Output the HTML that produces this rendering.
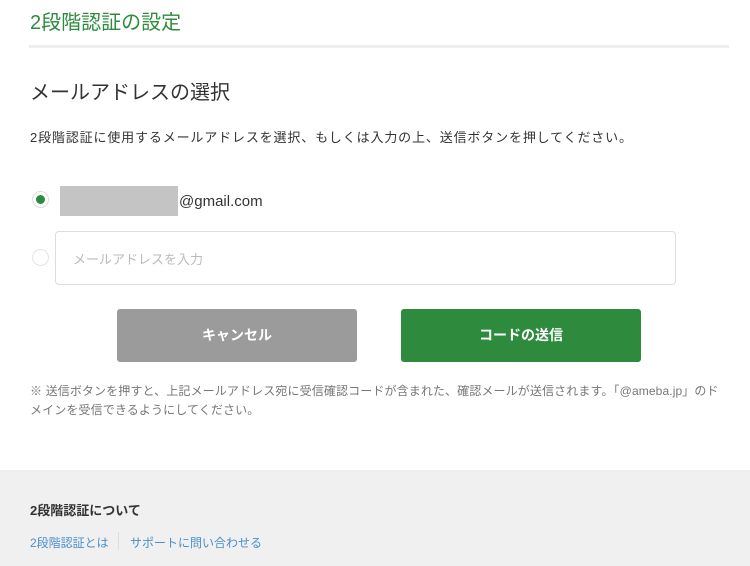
<!DOCTYPE html>
<html><head><meta charset="utf-8"><style>
*{margin:0;padding:0;box-sizing:border-box}
body{width:750px;height:566px;background:#fff;font-family:"Liberation Sans","Noto Sans CJK JP",sans-serif;color:#333;position:relative;overflow:hidden}
.a{position:absolute;white-space:nowrap}
</style></head><body>
<div class="a" style="left:30px;top:6px;font-size:20px;color:#2e8b3e">2段階認証の設定</div>
<div class="a" style="left:29px;top:45px;width:700px;height:3px;background:#eee"></div>
<div class="a" style="left:30px;top:76px;font-size:20px;color:#333">メールアドレスの選択</div>
<div class="a" style="left:30px;top:127px;font-size:13px;letter-spacing:0.85px;color:#333">2段階認証に使用するメールアドレスを選択、もしくは入力の上、送信ボタンを押してください。</div>
<div class="a" style="left:32px;top:191px;width:17px;height:17px;border-radius:50%;border:1px solid #ddd;background:#fff"></div>
<div class="a" style="left:36px;top:195px;width:9px;height:9px;border-radius:50%;background:#2e8b3e"></div>
<div class="a" style="left:60px;top:186px;width:118px;height:30px;background:#c4c4c4"></div>
<div class="a" style="left:179px;top:193px;font-size:15px;color:#333">@gmail.com</div>
<div class="a" style="left:32px;top:249px;width:17px;height:17px;border-radius:50%;border:1px solid #e4e4e4"></div>
<div class="a" style="left:55px;top:231px;width:621px;height:54px;border:1px solid #ddd;border-radius:4px"></div>
<div class="a" style="left:73px;top:249px;font-size:13px;color:#bbb">メールアドレスを入力</div>
<div class="a" style="left:117px;top:309px;width:240px;height:53px;background:#9b9b9b;border-radius:3px;color:#fff;font-weight:bold;font-size:14px;text-align:center;line-height:53px">キャンセル</div>
<div class="a" style="left:401px;top:309px;width:240px;height:53px;background:#2e8b3e;border-radius:3px;color:#fff;font-weight:bold;font-size:14px;text-align:center;line-height:53px">コードの送信</div>
<div class="a" style="left:30px;top:382px;font-size:12px;letter-spacing:0.12px;color:#777;line-height:19px">※ 送信ボタンを押すと、上記メールアドレス宛に受信確認コードが含まれた、確認メールが送信されます。「@ameba.jp」のド<br>メインを受信できるようにしてください。</div>
<div class="a" style="left:0;top:470px;width:750px;height:96px;background:#f0f0f0"></div>
<div class="a" style="left:30px;top:500px;font-size:13px;font-weight:bold;color:#333">2段階認証について</div>
<div class="a" style="left:30px;top:534px;font-size:12px;color:#4a90c8">2段階認証とは</div>
<div class="a" style="left:118px;top:532px;width:1px;height:18px;background:#ddd"></div>
<div class="a" style="left:130px;top:534px;font-size:12px;color:#4a90c8">サポートに問い合わせる</div>
</body></html>
